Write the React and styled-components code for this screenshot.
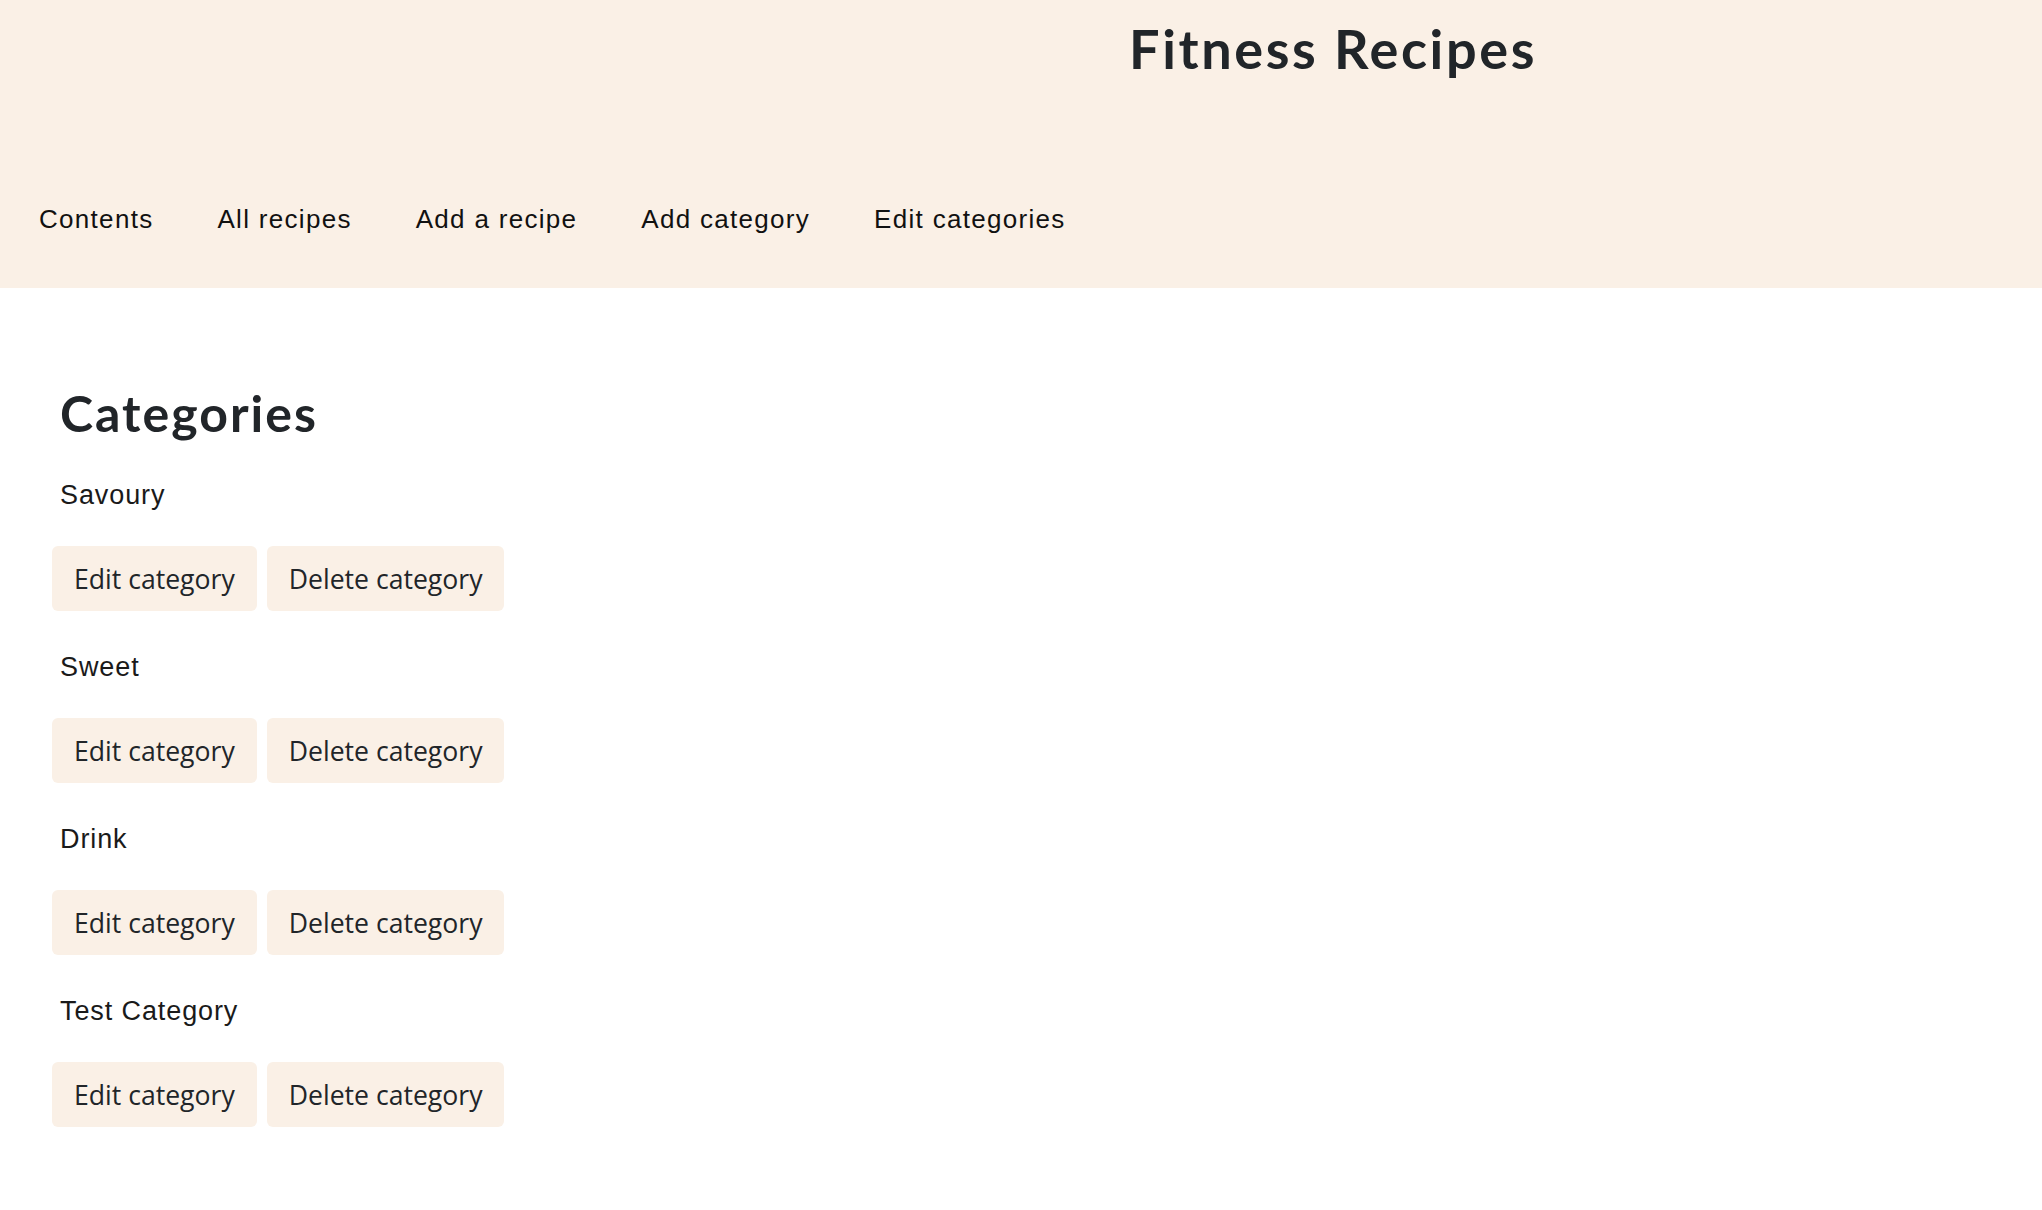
import React from "react";
import styled, { createGlobalStyle } from "styled-components";

const GlobalStyle = createGlobalStyle`
  html, body { margin: 0; padding: 0; background: #ffffff; }
  body { font-family: "Liberation Sans", Arial, sans-serif; color: #212529; }
  * { box-sizing: border-box; }
`;

const Header = styled.header`
  background: #faf0e6;
  height: 288px;
  padding-top: 17px;
  display: flex;
  flex-direction: column;
`;

const TitleRow = styled.div`
  display: flex;
  justify-content: center;
  padding-left: 624px;
`;

const Title = styled.h1`
  margin: 0;
  font-family: Lato, "Open Sans", sans-serif;
  font-weight: 700;
  font-size: 54px;
  line-height: 64px;
  letter-spacing: 2.6px;
  color: #212529;
`;

const Nav = styled.nav`
  display: flex;
  gap: 64px;
  margin-top: 118px;
  padding-left: 39px;
`;

const NavLink = styled.a`
  font-family: "Liberation Sans", Arial, sans-serif;
  font-size: 26px;
  line-height: 40px;
  letter-spacing: 1.3px;
  color: #111111;
  text-decoration: none;
  cursor: pointer;
`;

const Main = styled.main`
  padding: 96px 0 0 52px;
`;

const Heading = styled.h2`
  margin: 0 0 33px 8px;
  font-family: Lato, "Open Sans", sans-serif;
  font-weight: 700;
  font-size: 50px;
  line-height: 58px;
  letter-spacing: 2px;
  color: #212529;
`;

const Group = styled.section`
  display: flex;
  flex-direction: column;
  margin-bottom: 36px;
`;

const Label = styled.p`
  margin: 0 0 31px 8px;
  font-family: "Liberation Sans", Arial, sans-serif;
  font-size: 27px;
  line-height: 40px;
  letter-spacing: 0.9px;
  color: #1a1a1a;
`;

const Actions = styled.div`
  display: flex;
  gap: 10px;
`;

const Button = styled.button`
  height: 65px;
  padding: 0 22px;
  border: none;
  border-radius: 6px;
  background: #faf0e6;
  font-family: "Open Sans", "Noto Sans", sans-serif;
  font-size: 26.6px;
  color: #212529;
  cursor: pointer;
  display: flex;
  align-items: center;
`;

const categories = ["Savoury", "Sweet", "Drink", "Test Category"];
const navItems = ["Contents", "All recipes", "Add a recipe", "Add category", "Edit categories"];

export default function App() {
  return (
    <>
      <GlobalStyle />
      <Header>
        <TitleRow>
          <Title>Fitness Recipes</Title>
        </TitleRow>
        <Nav>
          {navItems.map((n) => (
            <NavLink key={n}>{n}</NavLink>
          ))}
        </Nav>
      </Header>
      <Main>
        <Heading>Categories</Heading>
        {categories.map((c) => (
          <Group key={c}>
            <Label>{c}</Label>
            <Actions>
              <Button>Edit category</Button>
              <Button>Delete category</Button>
            </Actions>
          </Group>
        ))}
      </Main>
    </>
  );
}
